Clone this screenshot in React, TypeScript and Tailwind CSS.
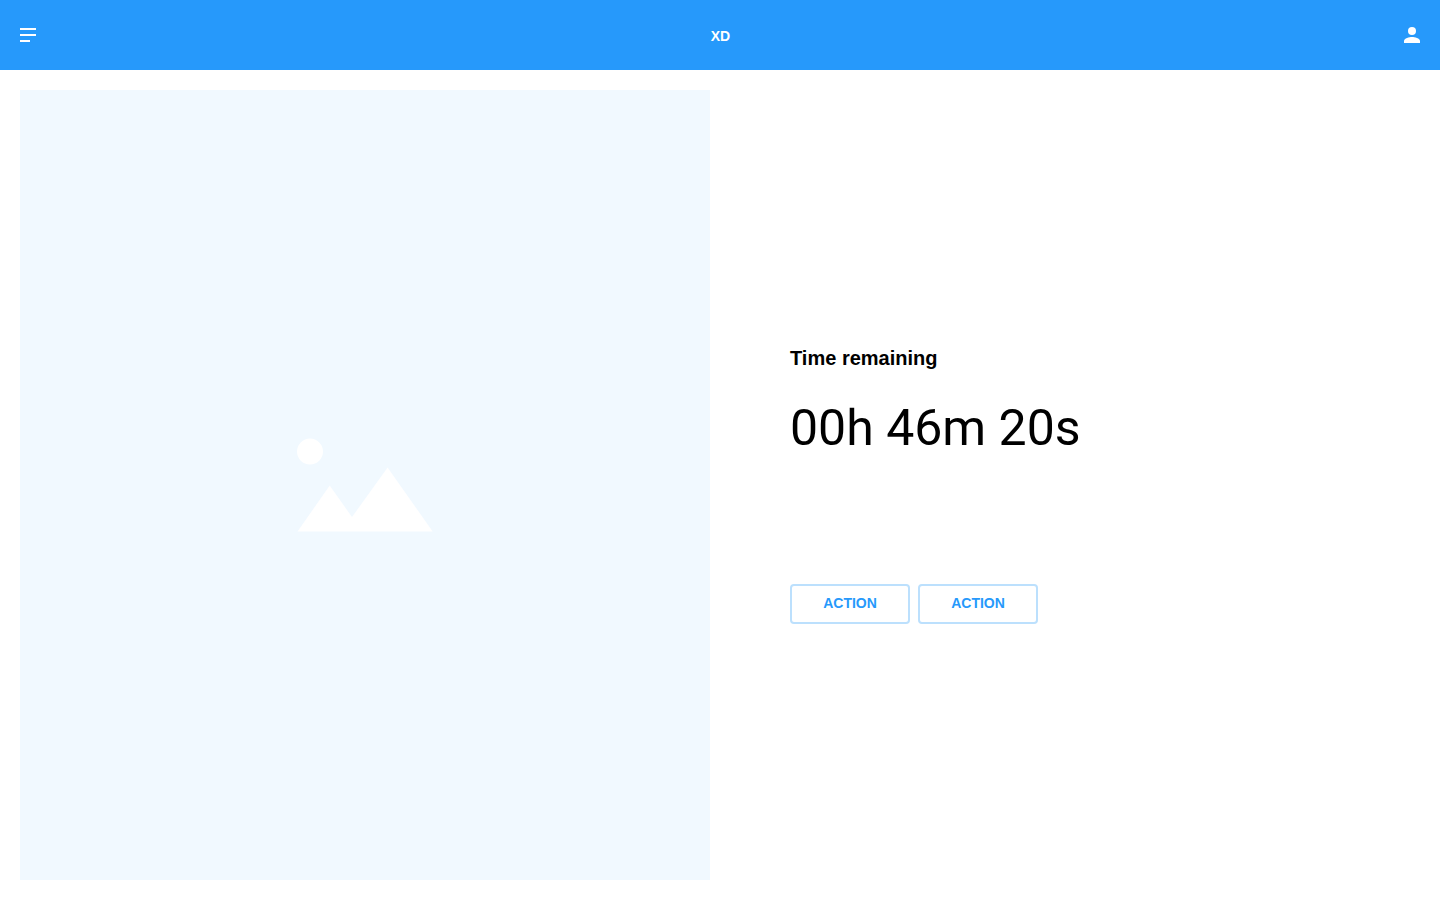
export default function App() {
  return (
    <div className="flex h-screen flex-col bg-white font-['Liberation_Sans',Arial,sans-serif] text-black">
      <header className="grid h-[70px] shrink-0 grid-cols-3 items-center bg-[#2699fb] px-5 text-white">
        <button aria-label="Menu" className="justify-self-start">
          <svg width="16" height="14" viewBox="0 0 16 14" fill="currentColor">
            <path d="M0 0h16v2H0zM0 6h16v2H0zM0 12h10v2H0z" />
          </svg>
        </button>
        <h1 className="justify-self-center pt-0.5 pl-px text-[14px] leading-4 font-bold">XD</h1>
        <button aria-label="Profile" className="justify-self-end">
          <svg width="16" height="16" viewBox="0 0 16 16" fill="currentColor">
            <circle cx="8" cy="4" r="4" />
            <path d="M8 10c-2.700 0-8 1.300-8 4v2h16v-2c0-2.700-5.300-4-8-4z" />
          </svg>
        </button>
      </header>
      <main className="flex min-h-0 flex-1 gap-20 p-5">
        <div className="flex w-[690px] items-center justify-center bg-[#f1f9ff]">
          <svg width="136" height="94" viewBox="0 0 136 94" fill="white">
            <circle cx="13" cy="13.600" r="13" />
            <path d="M.5 93.500 32.700 47.500 55 79 90.600 29.500 135.700 93.500z" />
          </svg>
        </div>
        <section className="flex flex-col items-start pt-[256px]">
          <h2 className="text-[20px] leading-6 font-bold">Time remaining</h2>
          <p className="mt-7 font-['Roboto',sans-serif] text-[50px] leading-[60px]">00h 46m 20s</p>
          <div className="mt-[126px] flex gap-2">
            <button className="h-10 w-[120px] rounded-[4px] border-2 border-[#bce0fd] pb-0.5 text-[14px] font-bold text-[#2699fb]">ACTION</button>
            <button className="h-10 w-[120px] rounded-[4px] border-2 border-[#bce0fd] pb-0.5 text-[14px] font-bold text-[#2699fb]">ACTION</button>
          </div>
        </section>
      </main>
    </div>
  );
}
